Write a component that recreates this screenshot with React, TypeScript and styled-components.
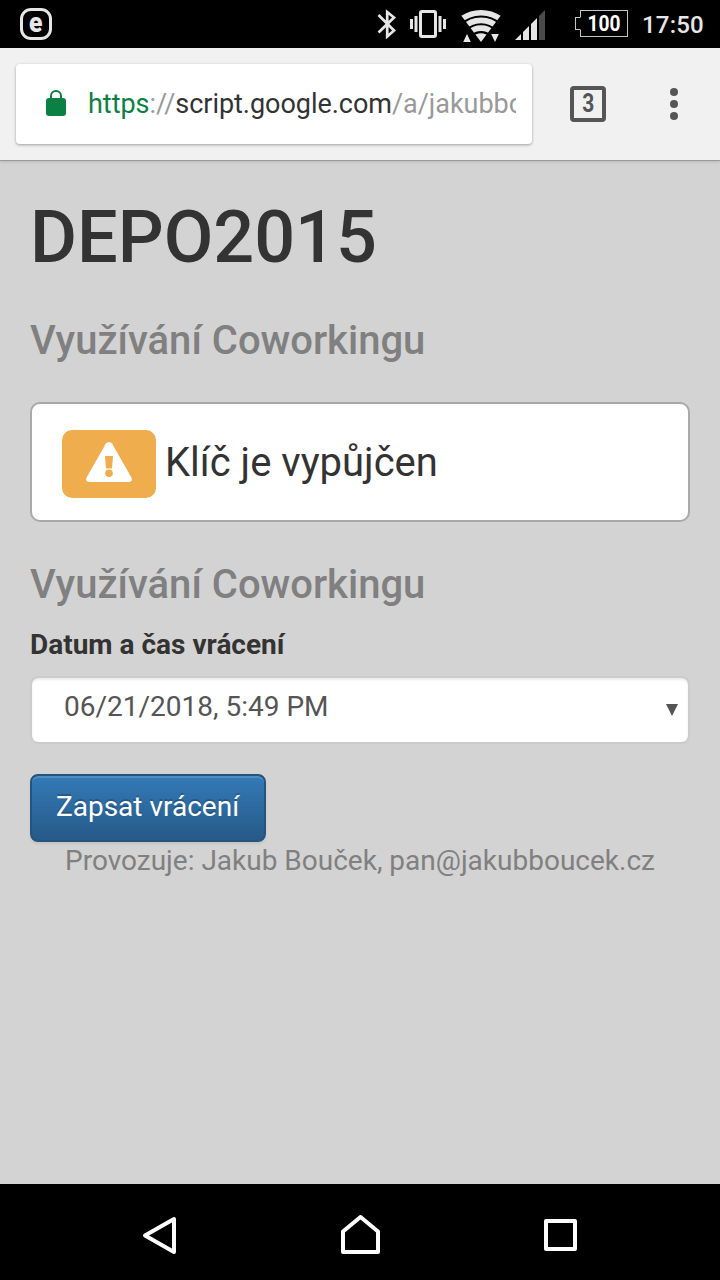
import React from "react";
import styled, { createGlobalStyle } from "styled-components";

const GlobalStyle = createGlobalStyle`
  *, *::before, *::after { box-sizing: border-box; }
  body { margin: 0; background: #000; }
  button, h1, h2, p { margin: 0; font-family: inherit; }
`;

const Screen = styled.div`
  display: flex;
  flex-direction: column;
  width: 720px;
  height: 1280px;
  overflow: hidden;
  font-family: Roboto, sans-serif;
  color: #333;
`;

const StatusBar = styled.header`
  display: flex;
  flex: none;
  justify-content: space-between;
  height: 48px;
  padding: 0 16px 0 20px;
  background: #000;
  color: #e6e6e6;
`;

const AppBadge = styled.div`
  display: flex;
  align-items: center;
  justify-content: center;
  width: 32px;
  height: 32px;
  margin-top: 8px;
  border: 3px solid #e6e6e6;
  border-radius: 11px;
  font-size: 28px;
  line-height: 26px;
  font-weight: 900;
`;

const Condensed = styled.span<{ $scale: number; $lift?: number }>`
  display: block;
  padding-bottom: ${({ $lift = 0 }) => $lift}px;
  transform: scaleX(${({ $scale }) => $scale});
`;

const StatusIcons = styled.div`
  display: flex;
  align-items: flex-start;
  svg { display: block; flex: none; }
`;

const Indicator = styled.span<{ $top: number; $gap?: number }>`
  margin-top: ${({ $top }) => $top}px;
  margin-left: ${({ $gap = 0 }) => $gap}px;
`;

const Battery = styled.div`
  display: flex;
  align-items: center;
  height: 27px;
  margin: 10px 0 0 30px;
`;

const BatteryCap = styled.span`
  width: 6px;
  height: 13px;
  margin-right: -1px;
  z-index: 1;
  background: #000;
  border: 1px solid #c4c4c4;
  border-right-color: #000;
`;

const BatteryBody = styled.span`
  display: flex;
  align-items: center;
  justify-content: center;
  width: 48px;
  height: 27px;
  border: 1px solid #c4c4c4;
  color: #fff;
  font-size: 22px;
  line-height: 24px;
  font-weight: 700;
`;

const Clock = styled.time`
  width: 62px;
  margin: 10px 0 0 14px;
  font-size: 24px;
  line-height: 30px;
  font-weight: 500;
  letter-spacing: 0.2px;
  white-space: nowrap;
`;

const BrowserBar = styled.div`
  display: flex;
  flex: none;
  align-items: center;
  height: 112px;
  padding: 0 40px 0 16px;
  background: #f1f1f1;
  position: relative;
  box-shadow: 0 1px 0 #9b9b9b, 0 2px 3px rgba(0, 0, 0, 0.12);
`;

const AddressBox = styled.div`
  display: flex;
  align-items: center;
  width: 516px;
  height: 80px;
  padding: 0 16px 0 30px;
  background: #fff;
  border-radius: 4px;
  box-shadow: 0 1px 3px rgba(0, 0, 0, 0.35);
  svg { flex: none; margin-bottom: 2px; }
`;

const Url = styled.div`
  flex: 1;
  min-width: 0;
  margin-left: 22px;
  overflow: hidden;
  color: #333;
  font-size: 27px;
  line-height: 36px;
  letter-spacing: -0.03px;
  white-space: nowrap;
`;

const UrlPart = styled.span<{ $secure?: boolean }>`
  color: ${({ $secure }) => ($secure ? "#0b8043" : "#999")};
`;

const TabCount = styled.div`
  display: flex;
  align-items: center;
  justify-content: center;
  width: 36px;
  height: 36px;
  margin-left: 38px;
  border: 4px solid #555;
  border-radius: 4px;
  color: #555;
  font-size: 25px;
  line-height: 28px;
  font-weight: 700;
`;

const MenuDots = styled.div`
  display: flex;
  flex-direction: column;
  gap: 4px;
  margin-left: 64px;
`;

const Dot = styled.i`
  width: 8px;
  height: 8px;
  border-radius: 50%;
  background: #555;
`;

const Page = styled.main`
  flex: 1;
  padding: 38px 30px 0;
  background: #d3d3d3;
`;

const Title = styled.h1`
  font-size: 72px;
  line-height: 79px;
  font-weight: 500;
`;

const SectionTitle = styled.h2`
  margin-top: 42px;
  color: #808080;
  font-size: 40px;
  line-height: 44px;
  font-weight: 500;
`;

const Panel = styled.section`
  display: flex;
  align-items: center;
  height: 120px;
  margin: 39px 0 41px;
  padding-left: 30px;
  background: #fff;
  border: 2px solid #a9a9a9;
  border-radius: 10px;
  font-size: 40px;
  line-height: 56px;

  & + ${SectionTitle} { margin-top: 0; }
`;

const WarningBadge = styled.span`
  display: flex;
  align-items: center;
  justify-content: center;
  width: 94px;
  height: 68px;
  margin: 4px 9px 0 0;
  padding-bottom: 4px;
  background: #f0ad4e;
  border-radius: 10px;
`;

const PanelText = styled.span`
  padding-top: 2px;
`;

const Label = styled.label`
  display: block;
  margin-top: 18px;
  font-size: 28px;
  line-height: 40px;
  font-weight: 700;
`;

const DateField = styled.div`
  display: flex;
  align-items: center;
  justify-content: space-between;
  height: 68px;
  margin-top: 11px;
  padding: 0 10px 6px 32px;
  background: #fff;
  background-clip: padding-box;
  border: 2px solid #ccc;
  border-radius: 8px;
  box-shadow: inset 0 2px 2px rgba(0, 0, 0, 0.075);
  color: #555;
  font-size: 28px;
  line-height: 40px;
`;

const Arrow = styled.svg`
  margin-top: 5px;
`;

const SubmitButton = styled.button`
  display: block;
  width: 236px;
  height: 68px;
  margin-top: 30px;
  padding: 0 1px 3px 0;
  border: 2px solid #245580;
  border-radius: 8px;
  background: linear-gradient(to bottom, #337ab7, #265a88);
  box-shadow: inset 0 2px 0 rgba(255, 255, 255, 0.15), 0 2px 2px rgba(0, 0, 0, 0.075);
  color: #fff;
  font-size: 28px;
  line-height: 40px;
  text-shadow: 0 -2px 0 rgba(0, 0, 0, 0.2);
`;

const Footer = styled.p`
  color: #808080;
  font-size: 28px;
  line-height: 38px;
  text-align: center;
  white-space: nowrap;
`;

const NavBar = styled.nav`
  display: flex;
  flex: none;
  align-items: center;
  justify-content: space-between;
  height: 96px;
  padding: 10px 138px 0;
  background: #000;
  svg { display: block; }
`;

const BluetoothIcon = () => (
  <svg width="20" height="30" viewBox="0 0 20 30" fill="none" stroke="#e6e6e6" strokeWidth="2.7">
    <path d="M1.5 6 17 21.5 10.2 27.5V3L17 8.5 1.5 23.5" />
  </svg>
);

const VibrateIcon = () => (
  <svg width="36" height="28" viewBox="0 0 36 28" fill="#e6e6e6">
    <path d="M0 9h3v10H0zM4.5 6h3v16h-3zM28.5 6h3v16h-3zM33 9h3v10h-3z" />
    <rect x="10.5" y="1.5" width="15" height="25" rx="1.5" fill="none" stroke="#e6e6e6" strokeWidth="3" />
  </svg>
);

const WifiIcon = () => (
  <svg width="40" height="32" viewBox="0 0 40 32">
    <clipPath id="wifi-cone">
      <path d="M20 32-1 4V0H41V4z" />
    </clipPath>
    <g clipPath="url(#wifi-cone)" fill="none" stroke="#e6e6e6" strokeWidth="5.6">
      <circle cx="20" cy="35.6" r="32.8" />
      <circle cx="20" cy="35.6" r="25.2" />
      <circle cx="20" cy="35.6" r="17.5" />
      <circle cx="20" cy="35.6" r="12.3" fill="#e6e6e6" stroke="none" />
    </g>
    <path d="M2.2 32 6 24 9.8 32zM30.2 24h7.6L34 32z" fill="#e6e6e6" />
  </svg>
);

const SignalIcon = () => (
  <svg width="30" height="30" viewBox="0 0 30 30">
    <path d="M0 30 6 24V30zM8 22 14 16V30H8zM16 14 22 8V30H16z" fill="#e6e6e6" />
    <path d="M24 6 30 0V30H24z" fill="#4a4a4a" />
  </svg>
);

const LockIcon = () => (
  <svg width="20" height="26" viewBox="0 0 20 26">
    <path d="M5 10V6a5 5 0 0 1 10 0v4" fill="none" stroke="#0b8043" strokeWidth="2" />
    <rect y="8" width="20" height="18" rx="3" fill="#0b8043" />
  </svg>
);

const WarningIcon = () => (
  <svg width="46" height="40" viewBox="0 0 46 40">
    <path d="M20 1.6Q23-1.6 26 1.6L45.4 35.5Q47 39.8 42.5 40H3.5Q-1 39.8.6 35.5z" fill="#fff" />
    <path d="M19 14h8l-1 12.5h-6z" fill="#f0ad4e" />
    <circle cx="23" cy="31.3" r="3.8" fill="#f0ad4e" />
  </svg>
);

const NavIcon = ({ d }: { d: string }) => (
  <svg width="44" height="44" viewBox="0 0 44 44" fill="none" stroke="#fff" strokeWidth="4" strokeLinejoin="round">
    <path d={d} />
  </svg>
);

export default function App() {
  return (
    <>
      <GlobalStyle />
      <Screen>
        <StatusBar>
          <AppBadge><Condensed $scale={0.88} $lift={2}>e</Condensed></AppBadge>
          <StatusIcons>
            <Indicator $top={9}><BluetoothIcon /></Indicator>
            <Indicator $top={10} $gap={13}><VibrateIcon /></Indicator>
            <Indicator $top={10} $gap={15}><WifiIcon /></Indicator>
            <Indicator $top={10} $gap={14}><SignalIcon /></Indicator>
            <Battery>
              <BatteryCap />
              <BatteryBody><Condensed $scale={0.87}>100</Condensed></BatteryBody>
            </Battery>
            <Clock>17:50</Clock>
          </StatusIcons>
        </StatusBar>
        <BrowserBar>
          <AddressBox>
            <LockIcon />
            <Url>
              <UrlPart $secure>https</UrlPart>
              <UrlPart>://</UrlPart>script.google.com<UrlPart>/a/jakubbo</UrlPart>
            </Url>
          </AddressBox>
          <TabCount><Condensed $scale={0.84}>3</Condensed></TabCount>
          <MenuDots>
            <Dot />
            <Dot />
            <Dot />
          </MenuDots>
        </BrowserBar>
        <Page>
          <Title>DEPO2015</Title>
          <SectionTitle>Využívání Coworkingu</SectionTitle>
          <Panel>
            <WarningBadge><WarningIcon /></WarningBadge>
            <PanelText>Klíč je vypůjčen</PanelText>
          </Panel>
          <SectionTitle>Využívání Coworkingu</SectionTitle>
          <Label>Datum a čas vrácení</Label>
          <DateField>
            06/21/2018, 5:49 PM
            <Arrow width="12" height="12" viewBox="0 0 12 12">
              <path d="M0 0H12L6 12z" fill="#555" />
            </Arrow>
          </DateField>
          <SubmitButton>Zapsat vrácení</SubmitButton>
          <Footer>Provozuje: Jakub Bouček, pan@jakubboucek.cz</Footer>
        </Page>
        <NavBar>
          <NavIcon d="M7 20.5 36 4V37z" />
          <NavIcon d="M5 16.5 22.5 2 40 16.5V37H5z" />
          <NavIcon d="M8 6H37V34H8z" />
        </NavBar>
      </Screen>
    </>
  );
}
